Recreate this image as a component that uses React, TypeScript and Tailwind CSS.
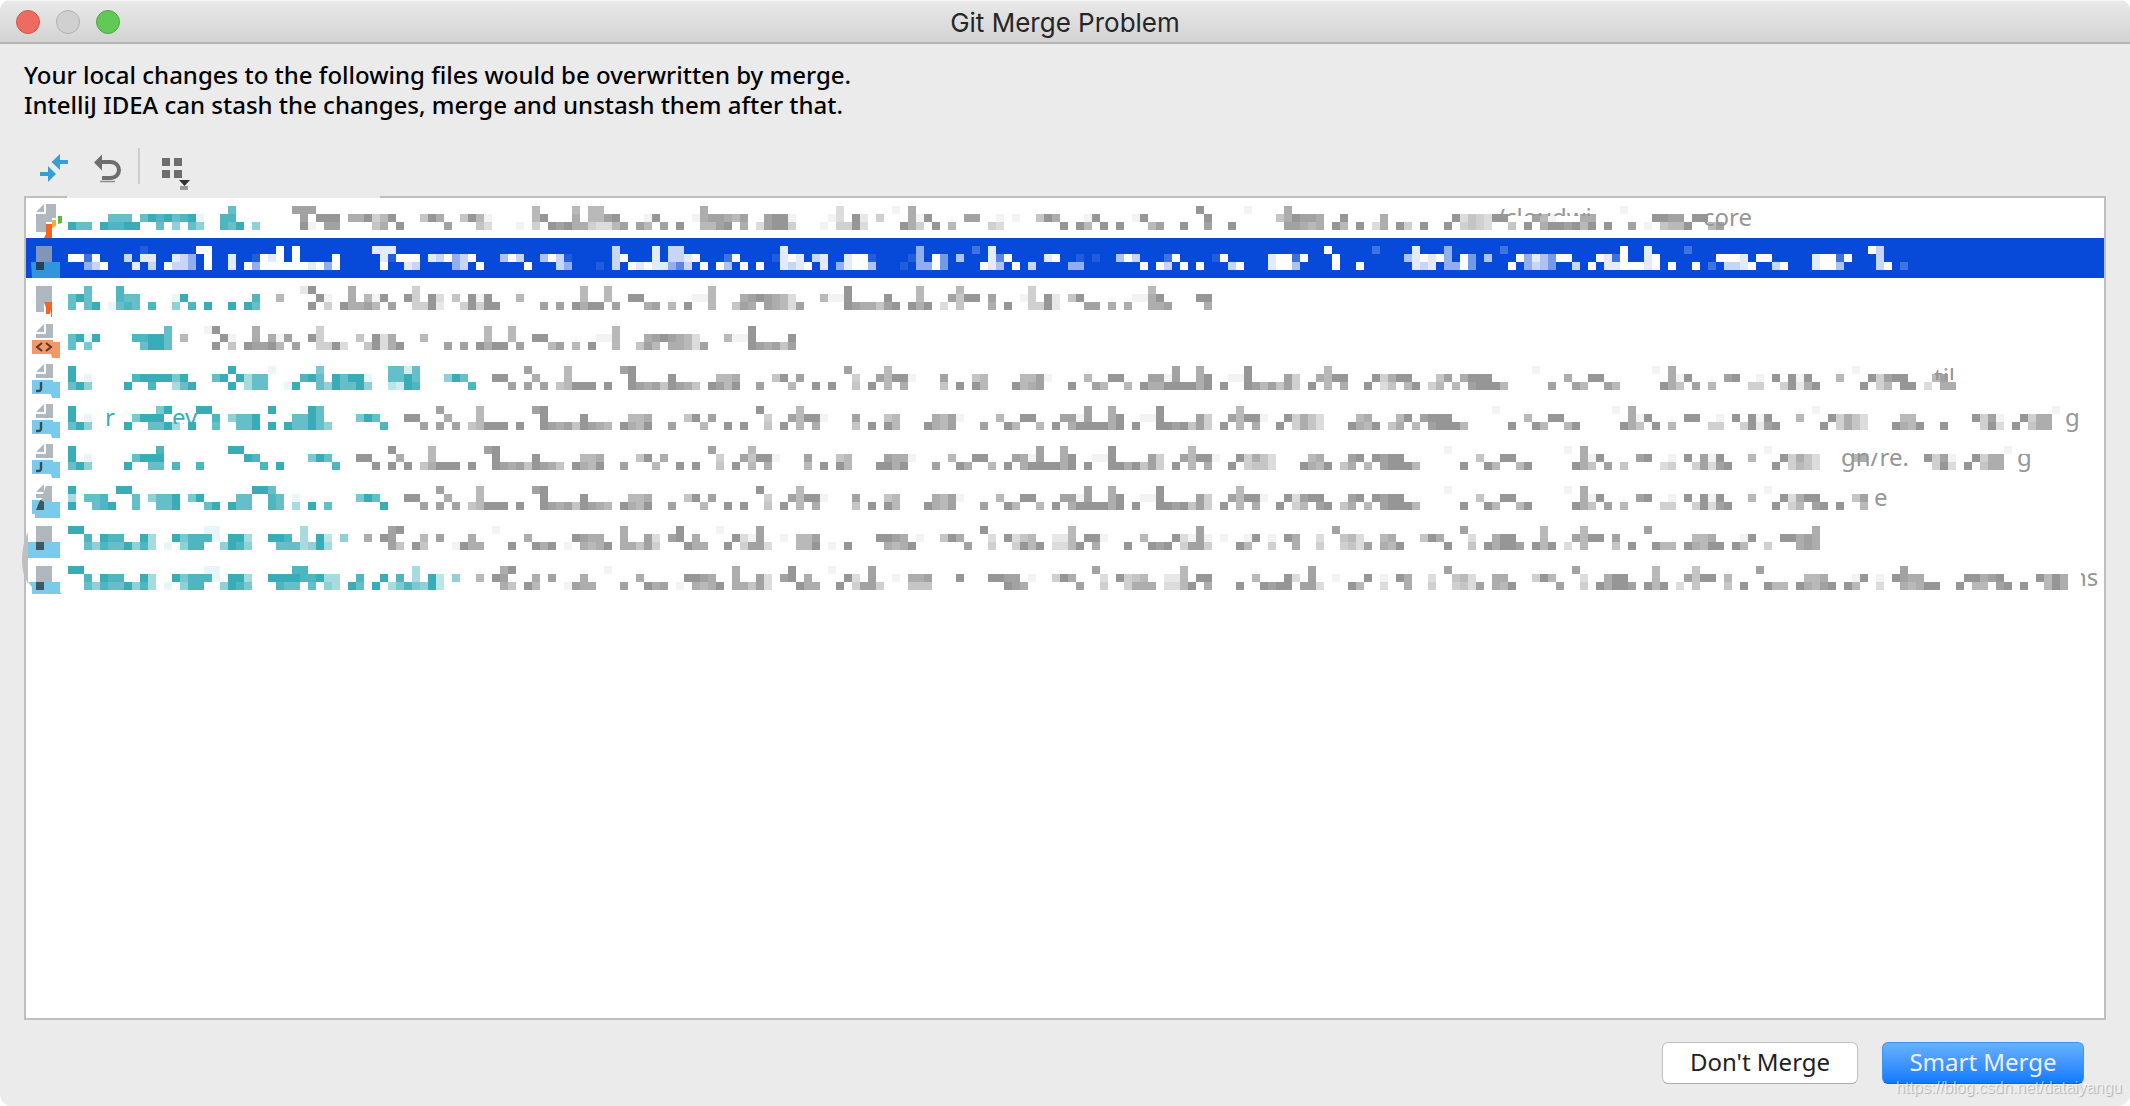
import React from "react";

/* Pixelated file names: each band lists runs as "column:levels", levels 1 (faint) to 9 (solid). */
type Tile = { start: number; bands: [string, string, string] };
type Fragment = { text: string; className: string };
type FileRow = {
  icon: React.ReactNode;
  label: string;
  split: number;
  selected?: boolean;
  tiles: Tile[];
  fragments?: Fragment[];
};

const CELL = 8;

const tile = (start: number, top: string, mid: string, bottom: string): Tile => ({
  start,
  bands: [top, mid, bottom],
});

function Mosaic({ row }: { row: FileRow }) {
  const cells: React.ReactNode[] = [];
  row.tiles.forEach((t) =>
    t.bands.forEach((band, y) =>
      band
        .split(" ")
        .filter(Boolean)
        .forEach((run) => {
          const [at, levels] = run.split(":");
          levels.split("").forEach((level, i) => {
            const col = t.start + Number(at) + i;
            const fill = row.selected ? "#ffffff" : col < row.split ? "#38adb8" : "#969696";
            cells.push(
              <rect
                key={`${col}-${y}`}
                x={col * CELL}
                y={y * CELL + CELL}
                width={CELL}
                height={CELL}
                fill={fill}
                opacity={Number(level) / 9}
              />
            );
          });
        })
    )
  );
  return (
    <svg className="h-10 w-full" shapeRendering="crispEdges" aria-hidden="true">
      {cells}
    </svg>
  );
}

function IconBox({ children }: { children: React.ReactNode }) {
  return (
    <svg className="h-10 w-[42px] shrink-0" viewBox="0 0 42 40" aria-hidden="true">
      {children}
    </svg>
  );
}

const PropertiesIcon = (
  <IconBox>
    <path d="M10 14L18 6V14Z" fill="#afb8bf" />
    <path d="M20 6H30V20H26V24H20V34H10V16H20Z" fill="#afb8bf" />
    <path d="M20 26H26V40H18L20 36Z" fill="#f26522" />
    <path d="M26 22H30V28L26 30Z" fill="#f4af3d" />
    <path d="M32 18H36V25L32 26Z" fill="#62b543" />
  </IconBox>
);

const SelectedIcon = (
  <IconBox>
    <rect x="10" y="8" width="16" height="16" fill="#8095ba" />
    <path d="M5 24H34V40H6Z" fill="#2f95dd" />
    <rect x="10" y="24" width="8" height="8" fill="#27405c" />
  </IconBox>
);

const PlainIcon = (
  <IconBox>
    <path d="M10 8H26V24H18V34H10Z" fill="#afb8bf" />
    <path d="M18 24H26V39H25V32L24 36H20V30Z" fill="#f26522" />
  </IconBox>
);

function SheetIcon({ kind }: { kind: "xml" | "java" }) {
  return (
    <IconBox>
      <path d="M10 14L18 6V14Z" fill="#afb8bf" />
      <path d="M20 6H27V20H10V16H20Z" fill="#afb8bf" />
      <path d="M6 22H27V24H34V40H26L25 36H6Z" fill={kind === "xml" ? "#f79768" : "#7acbeb"} />
      {kind === "xml" ? (
        <path d="M16 25L11 29L16 33M20 25L25 29L20 33" fill="none" stroke="#4b3a35" strokeWidth="2" />
      ) : (
        <path d="M15 24V30.500Q15 33 12.500 33H10" fill="none" stroke="#3a4f5b" strokeWidth="2.400" />
      )}
    </IconBox>
  );
}

const SlantedIcon = (
  <IconBox>
    <path d="M10 14L18 6V14Z" fill="#afb8bf" />
    <path d="M20 8H26V24H14L16 20H10V16H17Z" fill="#afb8bf" />
    <path d="M6 22H14L13 24H34V40H9V36H6Z" fill="#7acbeb" />
    <path d="M14 22H15L18 24V32H10Z" fill="#3f5763" />
  </IconBox>
);

const BlockIcon = (
  <IconBox>
    <rect x="10" y="8" width="16" height="16" fill="#afb8bf" />
    <rect x="2" y="24" width="32" height="16" fill="#7acbeb" />
    <rect x="10" y="24" width="8" height="8" fill="#3f5763" />
  </IconBox>
);

const LastBlockIcon = (
  <IconBox>
    <rect x="10" y="8" width="16" height="16" fill="#afb8bf" />
    <path d="M2 24H34V34L36 36H6V29Z" fill="#7acbeb" />
    <rect x="10" y="24" width="8" height="8" fill="#3f5763" />
  </IconBox>
);

const SHARED_44 = tile(
  44,
  "2:8 7:6 14:89 42:9 47:6",
  "3:7 7:6 15:9 20:9 26:667 33:59 36:8 43:4 46:86991 54:8 58:56 64:7681",
  "0:8 2:8 4:8 6:56999 12:9 15:987859876 25:9769 31:8 35:6 38:9 40:9 43:5 45:9 47:6 49:7 54:5 56:9 58:96 63:9768"
);

const rows: FileRow[] = [
  {
    icon: PropertiesIcon,
    label: "File 1",
    split: 27,
    tiles: [
      tile(
        0,
        "20:7 28:888",
        "5:777 9:79897891 19:88 29:8 31:999 35:779469",
        "0:977 4:98899 11:7 13:5 15:75 19:879 23:5 29:91 32:88 38:57 41:9"
      ),
      tile(
        44,
        "14:6 19:6 21:66 35:7 52:3 59:1 61:7",
        "0:597 5:5961 14:69 19:7 21:6689 28:19 34:17887 39:68 43:8991 51:13 54:92 57:4 61:719 68:88",
        "3:8 7:53 12:1 14:4 16:989774336 25:8 27:86 30:8 32:9 35:6689 40:7 42:38994 50:1 52:4493 60:974 64:9 66:6"
      ),
      tile(
        114,
        "27:9 33:1 38:7",
        "2:1 4:1 7:597 13:19 19:19 28:9 37:579887 45:9 50:7 59:9354399 69:8",
        "1:43 10:9 12:96 15:9 17:9 21:68 25:9 28:8 31:9 38:88767 44:96 47:9 49:37 52:94 55:9 58:9 60:4543 66:5 68:9"
      ),
      tile(184, "10:1", "0:61 5:77 14:9988 19:99", "0:7998969 8:9 11:8 13:1 15:5669 21:68"),
    ],
    fragments: [
      { text: "/cloudwi", className: "left-[1428px] [clip-path:inset(0_0_20px_0)]" },
      { text: "core", className: "left-[1635px]" },
    ],
  },
  {
    icon: SelectedIcon,
    label: "File 2",
    split: 0,
    selected: true,
    tiles: [
      tile(
        0,
        "9:1 16:99 26:9 28:9 38:888",
        "0:9929 7:7 9:88 13:875 17:9 20:8 23:1989 28:9 33:9 39:81999",
        "2:579 8:8 10:7 12:9775 17:9 20:8 22:959999998959 39:9 42:87"
      ),
      tile(
        44,
        "24:7 29:8 31:77 45:8 62:5 69:2",
        "1:879579 10:697 15:6971 24:79 29:8 31:7789 38:29 44:1898 49:78 53:8991 61:15 64:94 67:6",
        "4:57 7:9 13:9 17:75 22:1 24:7 26:98988537 35:9 37:96 40:9 42:9 45:8789 50:8 52:58996 60:1 62:5594"
      ),
      tile(
        114,
        "1:8 43:9 49:2 54:8 58:5 65:2",
        "1:839 8:89 12:1 14:1 17:697 23:29 29:19 36:89929 44:9 53:689895 60:94 63:6 67:958",
        "0:986 4:9 6:7 11:55 20:9 22:97 25:9 27:9 31:79 36:8996 44:9 47:9 54:878 58:5594 66:9 68:57"
      ),
      tile(
        184,
        "10:9 13:8 18:2 41:97",
        "0:6499 7:9829 13:89 22:9998 27:99 34:89929 42:7",
        "0:64 4:7 6:9 8:8899989 16:9 19:9 21:2 23:7789 29:79 34:8996 42:79 45:2"
      ),
    ],
  },
  {
    icon: PlainIcon,
    label: "File 3",
    split: 25,
    tiles: [
      tile(
        0,
        "2:7 6:8 29:29 35:7 43:4",
        "0:797 6:877 13:19 23:8 26:6 31:91 35:7 37:619 42:94",
        "0:7 2:79 5:1787 10:8 13:5 15:8 17:9 20:9 22:97 30:9 32:4 34:97786 40:8 43:4"
      ),
      tile(
        44,
        "20:6 23:6 36:6 53:9 62:6 67:6",
        "1:93 4:5 6:919 12:6 20:6 23:6 26:99 34:116 40:7898763 50:6119 58:9 62:6 66:8599",
        "0:492 5:49499 15:8 17:8 19:9799 24:8 28:78 31:6 33:9 36:6 39:587 43:87638 53:9877589 61:979 65:3 67:5"
      ),
      tile(114, "6:4 21:6", "1:8 5:14 8:92 11:59 19:1179 27:99", "1:7 3:9 6:4492 13:88 16:7 18:7 21:778 28:7"),
    ],
  },
  {
    icon: <SheetIcon kind="xml" />,
    label: "File 4",
    split: 13,
    tiles: [
      tile(
        0,
        "12:7 17:19 23:7 31:4",
        "0:7919 8:88997 14:6 19:91 23:7 25:718 30:94 36:5 38:937",
        "0:7 2:6 9:7997 18:9 20:5 22:98896 28:8 31:4493 37:59379"
      ),
      tile(
        44,
        "8:6 11:6 24:6 41:9",
        "0:6 8:6 11:6 14:99 22:116 28:7898763 38:6119 46:9",
        "3:8 5:8 7:9799 12:8 16:68 19:6 21:9 24:6 27:586 31:77638 41:987858"
      ),
    ],
  },
  {
    icon: <SheetIcon kind="java" />,
    label: "File 5",
    split: 51,
    tiles: [
      tile(
        0,
        "0:9 20:9 25:1 31:6 40:7727",
        "0:9 2:1 8:8999969 18:79 21:9477 29:897 33:97991 40:7797",
        "0:795 7:9 10:8 13:479 20:9 22:477 27:19 31:7597795 40:3298"
      ),
      tile(
        44,
        "13:8 18:6 25:89 53:8 58:6",
        "3:597 9:99 14:7 18:6 26:9 31:9 37:667 44:59 47:8 54:4 57:86991 65:8 69:5",
        "6:8 11:8 13:8 15:8 17:56999 23:9 26:987859875 36:9869 42:8 46:6 49:9 51:9 54:5 56:9 58:6 60:7 65:5 67:9 69:9"
      ),
      tile(
        114,
        "24:8 27:7 33:9 43:6 69:1",
        "0:6 5:6681 13:6 16:99 21:8818 27:79 31:119 38:84 42:7699 49:94799 57:58 60:7999",
        "0:6 4:9678 11:9 14:86 18:6 20:977999979 30:9 33:9868584 41:9 43:6 45:7 48:9 50:35 53:69 56:46 59:6 61:89996"
      ),
      tile(
        184,
        "14:1 16:7 39:1",
        "3:7 6:99 16:719 23:89 27:1 29:9 31:919 37:6 41:94899 49:68",
        "1:8 4:86 8:86 15:975 19:8 21:6 26:44 30:49279 40:9 42:46 45:99 48:3 50:77"
      ),
    ],
    fragments: [{ text: "til", className: "left-[1866px] [clip-path:inset(0_0_16px_0)]" }],
  },
  {
    icon: <SheetIcon kind="java" />,
    label: "File 6",
    split: 41,
    tiles: [
      tile(
        0,
        "0:9 11:69 16:99 25:9 30:97",
        "0:9 2:1 8:6999 18:8 20:5779 28:7797 36:697 42:99",
        "0:795 7:9 10:7794 15:9 18:7 21:779 25:9 27:977975 39:8"
      ),
      SHARED_44,
      tile(
        114,
        "13:8 16:7 22:9 32:6 64:1",
        "2:6 5:99 10:8818 16:79 20:119 27:84 31:86991 38:94753 47:67 52:69 55:8999 68:6",
        "0:8 3:96 7:6 9:9 11:7999979 19:9 22:9989584 30:9 32:6 34:7 37:9 39:4753 46:9769 51:57 54:6 56:89996 66:9 69:9"
      ),
      tile(
        184,
        "9:1 11:7 34:1 64:1",
        "1:99 11:719 18:99 22:1 24:9 26:919 32:6 36:94753 45:66 54:9481 60:9477",
        "0:6 3:69 10:975 14:9 16:6 21:44 25:49289 35:9 37:4753 44:9769 50:9 55:493 59:9 61:577"
      ),
    ],
    fragments: [
      { text: "r", className: "left-[37px] text-[#38adb8]" },
      { text: "ev", className: "left-[104px] text-[#38adb8] [clip-path:inset(0_0_12px_0)]" },
      { text: "g", className: "left-[1997px]" },
    ],
  },
  {
    icon: <SheetIcon kind="java" />,
    label: "File 7",
    split: 35,
    tiles: [
      tile(
        0,
        "0:9 11:8 20:99 40:9",
        "0:9 2:1 8:7999 22:98 30:697 36:99 41:7",
        "0:795 7:9 10:77 13:8 16:8 24:8 26:9 33:8 38:9 40:9 42:9"
      ),
      tile(
        44,
        "1:6 8:89 36:8 41:6",
        "1:6 9:9 14:9 20:667 27:59 30:7 37:4 40:85991 48:8 52:56 58:8771 66:6 69:9",
        "0:57999 6:9 9:987859875 19:9769 25:8 29:6 32:9 34:9 37:5 39:9 41:6 43:7 48:6 50:9 52:96 57:9979 64:8 67:97"
      ),
      tile(
        114,
        "7:8 10:7 16:9 26:6 58:1",
        "0:9 4:8718 10:79 14:119 21:84 25:86991 32:94753 41:67 46:89 49:9899 62:5 65:99",
        "1:6 3:9 5:7999979 13:9 16:9979584 24:9 26:6 28:7 31:9 33:4553 40:9769 45:57 48:6 50:89996 60:9 63:96 67:69"
      ),
      tile(
        184,
        "3:1 5:7 28:1 58:1",
        "5:719 12:89 16:1 18:9 20:819 26:6 30:94753 39:67 48:9481 54:9477",
        "4:975 8:8 10:5 15:34 19:48389 29:9 31:4653 49:493 53:9 55:577"
      ),
    ],
    fragments: [
      { text: "gn/re.", className: "left-[1773px] [clip-path:inset(15px_0_0_0)]" },
      { text: "g", className: "left-[1949px] [clip-path:inset(16px_0_0_0)]" },
    ],
  },
  {
    icon: SlantedIcon,
    label: "File 8",
    split: 41,
    tiles: [
      tile(
        0,
        "0:9 6:99 23:997",
        "0:4 2:778 8:7 10:5779 15:69 21:77 25:87 28:1 36:697 42:99",
        "0:9 3:789 8:7 11:779 17:79 20:977 25:87 28:4 30:9 32:7 39:9"
      ),
      SHARED_44,
      tile(
        114,
        "13:8 16:7 22:9 32:6 58:1",
        "2:6 5:99 10:8818 16:79 20:119 27:84 31:86991 38:93899 46:89 49:9899 62:5 65:99",
        "0:8 3:96 7:6 9:9 11:7999979 19:9 22:9989584 30:9 32:6 34:7 37:9 39:46 42:89 45:57 48:6 50:89996 60:9 63:96 67:69"
      ),
      tile(
        184,
        "3:1 5:7 28:1",
        "5:719 12:89 16:1 18:9 20:919 26:6 30:93799 39:58",
        "4:975 8:8 10:6 15:44 19:49389 29:9 31:46 34:89 37:9 40:6"
      ),
    ],
    fragments: [{ text: "e", className: "left-[1806px]" }],
  },
  {
    icon: BlockIcon,
    label: "File 9",
    split: 36,
    tiles: [
      tile(
        0,
        "0:99 17:11 29:4 40:89",
        "2:8 4:988 9:94 13:968881 20:994 25:998 29:4 31:93 34:5 37:7 39:98",
        "2:758779584 12:1 14:588 19:5985 26:7774594 40:85 43:9"
      ),
      tile(
        44,
        "9:1 25:7 32:9 37:1 42:8",
        "0:6 2:8 6:7 13:7 19:9877 25:7 28:83 31:89 34:7 39:9318 45:1 47:668 57:9987 62:1 65:597",
        "0:5 4:1977 11:9 14:979 18:1 20:7679 25:77584 33:977 38:9 40:4883 47:669 51:1 53:9 58:7679 68:8"
      ),
      tile(
        114,
        "0:9 11:6 27:8 44:8 60:8",
        "1:3 3:9356 9:226 13:991 20:6 24:93181 30:1 33:19 36:1 38:97 42:3 45:563 50:67 55:597 61:3 64:799",
        "1:4 4:4969 9:3369 14:7 18:9 21:989 25:4884 32:96 36:4 39:7 42:4 45:4538 50:769 58:9 61:5 63:97998 69:9"
      ),
      tile(
        184,
        "0:6 5:6 13:8 34:7",
        "0:6 4:8699 9:8 19:667 25:19 30:99787",
        "0:69 3:3 5:6 9:5 11:9 14:966 18:97699 24:96 28:4 32:787"
      ),
    ],
  },
  {
    icon: LastBlockIcon,
    label: "File 10",
    split: 49,
    tiles: [
      tile(
        0,
        "0:99 17:11 28:88 43:4",
        "2:8 4:988 9:94 13:968881 20:994 25:999988944 36:8 39:9 41:8 43:4",
        "2:758779584 12:1 14:588 19:5986 26:877 30:7 32:54 35:97 38:9 40:4686"
      ),
      tile(
        44,
        "10:79 23:1 39:7 46:9 51:1 56:8",
        "1:93 4:5 7:6 9:98 14:7 16:8 20:7 27:7 33:9987 39:7 42:83 45:89 48:7 53:93 56:8 59:1 61:778 67:9",
        "0:593 10:75 13:96 18:1877 25:8 28:978 32:1 34:7679 39:77583 47:977 52:9 54:4884 61:555"
      ),
      tile(
        114,
        "14:8 25:6 41:8 58:8",
        "1:9988 6:1 9:497 15:3 17:9456 23:226 27:99 34:6 38:93 41:8 44:1 48:9 50:1 52:97 56:3 59:563 64:77 69:4",
        "3:987 12:8 15:4 18:4777 23:3369 28:7 32:9 35:9899 40:883 46:96 50:3 53:7 56:4 59:4538 64:769"
      ),
      tile(
        184,
        "4:8 14:6 19:5 27:8 45:8",
        "0:96 5:3 8:799 14:6 18:8599 23:6 33:667 39:19 42:1 44:9877 53:99789 62:9697",
        "2:8 5:4 7:97998 13:969 17:3 19:5 23:5 25:9 28:966 32:97689 38:96 42:3 45:76799 52:9 54:66 57:89 60:9 63:697"
      ),
    ],
    fragments: [{ text: "ns", className: "left-[2004px] [clip-path:inset(0_0_0_9px)]" }],
  },
];

export default function App() {
  return (
    <main className="bg-white font-['Noto_Sans','Open_Sans',sans-serif] text-black">
      <div className="relative flex h-screen flex-col overflow-hidden rounded-t-[10px] rounded-b-xl bg-[#ebebeb]">
        <header className="grid h-11 shrink-0 grid-cols-[1fr_auto_1fr] items-center border-t border-b-2 border-t-[#f6f6f6] border-b-[#b4b4b4] bg-linear-to-b from-[#e9e9e9] to-[#d3d3d3] px-4">
          <div className="flex gap-4">
            <button aria-label="Close" className="size-6 rounded-full border border-[#d9544a] bg-[#ed6b60]" />
            <button aria-label="Minimize" className="size-6 rounded-full border border-[#b1b1b1] bg-[#d0d0d0]" />
            <button aria-label="Zoom" className="size-6 rounded-full border border-[#4fa843] bg-[#62c956]" />
          </div>
          <h1 className="pt-0.5 font-[Inter,sans-serif] text-[26px] leading-8 text-[#262626]">Git Merge Problem</h1>
        </header>

        <div className="flex min-h-0 grow flex-col px-6 pt-4 pb-[22px]">
          <p className="text-[24px] leading-[30px] font-medium">
            Your local changes to the following files would be overwritten by merge.
            <br />
            IntelliJ IDEA can stash the changes, merge and unstash them after that.
          </p>

          <div className="mt-7 mb-3 flex h-9 items-center" role="toolbar">
            <button aria-label="Show difference" className="h-9 w-14 pl-3.5">
              <svg viewBox="0 0 32 36" className="h-9 w-8" fill="#389fd6">
                <path d="M2 24H10V18L18 26L10 34V28H2Z" />
                <path d="M30 12H22V6L13.500 14L22 22V16H30Z" />
              </svg>
            </button>
            <button aria-label="Revert" className="h-9 w-14 pl-3">
              <svg viewBox="0 0 32 36" className="h-9 w-8">
                <path d="M2 14.500L10 6.500V22.500Z" fill="#6e6e6e" />
                <path d="M8 14H19A8 8 0 0 1 19 30H10" fill="none" stroke="#6e6e6e" strokeWidth="4" />
                <path d="M8 33.500H23" stroke="#8c8c8c" strokeWidth="1.500" />
              </svg>
            </button>
            <span className="ml-0.5 h-9 w-0.5 bg-[#cdcdcd]" />
            <button aria-label="Group by" className="h-9 pl-5">
              <svg viewBox="0 0 32 36" className="h-9 w-8 overflow-visible" fill="#6e6e6e">
                <path d="M2 10h8v8h-8zM14 10h8v8h-8zM2 22h8v8h-8zM14 22h8v8h-8z" />
                <path d="M19 32H30L24.500 38Z" fill="#333333" />
                <path d="M20 38h8v4h-8z" fill="#999999" />
              </svg>
            </button>
          </div>

          <div className="relative flex min-h-0 grow flex-col border-2 border-[#bfbfbf] bg-white">
            <span className="absolute -top-0.5 left-[41px] h-0.5 w-[313px] bg-[#ebebeb]" />
            <svg className="absolute top-[334px] -left-1.5 h-14 w-2" viewBox="0 0 8 56" aria-hidden="true">
              <path d="M8 0Q2 12 2 28Q2 42 8 52Z" fill="#bfbfbf" />
            </svg>
            <ul role="listbox" aria-label="Files" className="relative">
              {rows.map((row) => (
                <li
                  key={row.label}
                  role="option"
                  aria-selected={!!row.selected}
                  aria-label={row.label}
                  className={row.selected ? "flex h-10 bg-[#074ada]" : "flex h-10"}
                >
                  {row.icon}
                  <div className="relative min-w-0 grow text-[24px] leading-[38px] text-[#969696]">
                    <Mosaic row={row} />
                    {row.fragments?.map((f) => (
                      <span key={f.className} className={`absolute top-0 ${f.className}`}>
                        {f.text}
                      </span>
                    ))}
                  </div>
                </li>
              ))}
            </ul>
          </div>

          <footer className="mt-[22px] flex justify-end gap-6 pr-[22px] text-[24px] leading-8">
            <button className="h-[42px] w-[196px] rounded-md border border-[#c0c0c0] border-b-[#acacac] bg-white pb-0.5 text-[#1f1f1f]">
              Don't Merge
            </button>
            <button className="h-[42px] w-[202px] rounded-md border border-[#3b93f8] border-b-[#0a66f0] bg-linear-to-b from-[#67b1fe] to-[#0b79ff] pb-0.5 text-[#efefef]">
              Smart Merge
            </button>
          </footer>
        </div>

        <span className="absolute right-2 bottom-1.5 font-['Liberation_Sans',sans-serif] text-[16px] leading-6 text-white/60 [text-shadow:1px_1px_1px_rgba(0,0,0,0.25)]">
          https://blog.csdn.net/dataiyangu
        </span>
      </div>
    </main>
  );
}
